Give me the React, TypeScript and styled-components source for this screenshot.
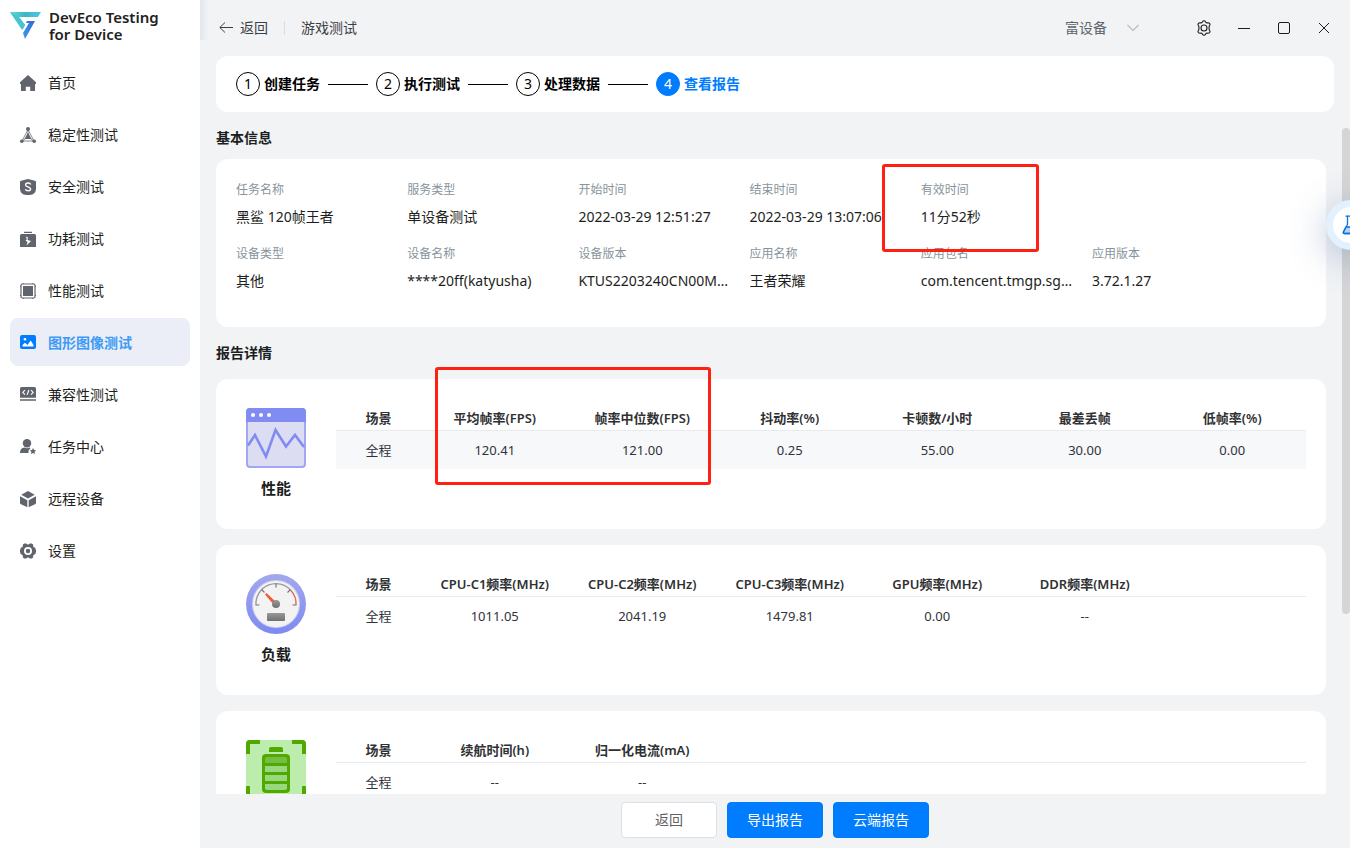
import React from "react";
import styled, { createGlobalStyle, css } from "styled-components";

const GlobalStyle = createGlobalStyle`
  * { box-sizing: border-box; }
  html, body, #root { height: 100%; margin: 0; }
  body {
    overflow: hidden;
    background: #f1f3f5;
    color: #1c1e21;
    font-family: "Noto Sans", "Noto Sans CJK SC", sans-serif;
    font-size: 14px;
    line-height: 20px;
  }
  button, select { font: inherit; color: inherit; }
`;

const Shell = styled.div`
  display: flex;
  height: 100vh;
`;

const Sidebar = styled.aside`
  flex: 0 0 200px;
  background: #fff;
`;

const Brand = styled.div`
  position: relative;
  display: flex;
  gap: 8px;
  height: 58px;
  padding: 9px 0 0 9px;

  &::after {
    content: "";
    position: absolute;
    left: 100%;
    top: 0;
    width: 8px;
    height: 40px;
    background: linear-gradient(to right, #e0e6ee, #f1f3f5);
  }
`;

const BrandName = styled.div`
  font-size: 15px;
  font-weight: 600;
  line-height: 17px;
  color: #222;
  white-space: nowrap;
`;

const Nav = styled.nav`
  display: flex;
  flex-direction: column;
  gap: 4px;
  padding: 0 10px;
`;

const NavItem = styled.a<{ $active?: boolean }>`
  display: flex;
  align-items: center;
  gap: 12px;
  height: 48px;
  padding: 2px 10px 0;
  border-radius: 8px;
  color: #1c1e21;
  text-decoration: none;

  svg { color: #60656d; }

  ${(p) =>
    p.$active &&
    css`
      background: #ebeef6;
      color: #3d9bf5;
      font-weight: 700;
      svg { color: #007dff; }
    `}
`;

const Main = styled.main`
  display: flex;
  flex: 1;
  flex-direction: column;
  min-width: 0;
`;

const TopBar = styled.header`
  display: flex;
  align-items: center;
  justify-content: space-between;
  height: 56px;
  padding: 0 6px 0 19px;
`;

const Crumbs = styled.div`
  display: flex;
  align-items: center;
  gap: 16px;
  color: #3c4046;
`;

const BackButton = styled.button`
  display: flex;
  align-items: center;
  gap: 7px;
  padding: 0;
  border: 0;
  background: none;
`;

const Divider = styled.span`
  width: 1px;
  height: 14px;
  background: #d8dde6;
`;

const Controls = styled.div`
  display: flex;
  align-items: center;
`;

const DeviceSelect = styled.label`
  display: flex;
  align-items: center;
  width: 119px;
  color: #60656d;

  select {
    width: 62px;
    padding: 0;
    border: 0;
    background: none;
    appearance: none;
  }
`;

const WindowButton = styled.button`
  display: flex;
  align-items: center;
  justify-content: center;
  width: 40px;
  height: 40px;
  padding: 0;
  border: 0;
  background: none;
`;

const Steps = styled.ol`
  display: flex;
  align-items: center;
  gap: 8px;
  flex: 0 0 56px;
  margin: 0 16px;
  padding: 0 20px;
  border-radius: 12px;
  background: #fff;
  list-style: none;
`;

const Step = styled.li<{ $active?: boolean }>`
  display: flex;
  align-items: center;
  gap: 4px;
  font-weight: 700;
  color: ${(p) => (p.$active ? "#007dff" : "#000")};

  &:not(:last-child)::after {
    content: "";
    width: 40px;
    height: 1px;
    margin-left: 4px;
    background: #000;
  }
`;

const StepNumber = styled.span<{ $active?: boolean }>`
  width: 24px;
  height: 24px;
  border: 1px solid ${(p) => (p.$active ? "#007dff" : "#000")};
  border-radius: 50%;
  background: ${(p) => (p.$active ? "#007dff" : "#fff")};
  color: ${(p) => (p.$active ? "#fff" : "#000")};
  font-weight: 400;
  line-height: 22px;
  text-align: center;
`;

const ReportArea = styled.div`
  position: relative;
  flex: 1;
  min-height: 0;
  margin-top: 16px;
`;

const Scroller = styled.div`
  display: flex;
  flex-direction: column;
  gap: 16px;
  height: 100%;
  padding: 0 24px 16px 16px;
  overflow-y: auto;
  scrollbar-width: none;
`;

const ScrollThumb = styled.div`
  position: absolute;
  top: 0;
  right: 0;
  width: 8px;
  height: 73%;
  border-radius: 4px;
  background: #d4d5d6;
`;

const Section = styled.section<{ $compact?: boolean }>`
  display: flex;
  flex-direction: column;
  gap: ${(p) => (p.$compact ? 11 : 16)}px;
`;

const SectionTitle = styled.h2`
  margin: 0;
  font-size: 14px;
  font-weight: 700;
  line-height: 20px;
`;

const InfoCard = styled.dl`
  display: grid;
  grid-template-columns: repeat(6, 16%);
  row-gap: 12px;
  margin: 0;
  padding: 21px 20px 31px;
  border-radius: 12px;
  background: #fff;
`;

const InfoItem = styled.div`
  position: relative;
  height: 52px;

  dt {
    margin-bottom: 7px;
    color: #87949c;
    font-size: 12px;
  }
  dd {
    margin: 0;
    padding-right: 16px;
    overflow: hidden;
    text-overflow: ellipsis;
    white-space: nowrap;
  }
`;

const Marker = styled.span`
  position: absolute;
  border: 3px solid #ff2012;
  border-radius: 3px;
  pointer-events: none;
`;

const TimeMarker = styled(Marker)`
  z-index: 1;
  top: -16px;
  left: -39px;
  width: 157px;
  height: 88px;
`;

const FrameRateMarker = styled(Marker)`
  top: -31px;
  left: 99px;
  width: calc((100% - 85px) / 3 - 19px);
  height: 118px;
`;

const MetricCard = styled.article`
  display: flex;
  flex: none;
  gap: 30px;
  height: 150px;
  padding: 19px 20px 0 30px;
  border-radius: 12px;
  background: #fff;
`;

const MetricBadge = styled.div`
  display: flex;
  flex-direction: column;
  align-items: center;
  gap: 10px;
  padding-top: 10px;
  font-size: 15px;
  font-weight: 700;
`;

const TableArea = styled.div`
  position: relative;
  flex: 1;
  min-width: 0;
`;

const Table = styled.table<{ $shaded?: boolean }>`
  width: 100%;
  border-collapse: collapse;
  table-layout: fixed;
  font-size: 13px;
  text-align: center;

  th {
    height: 32px;
    padding: 8px 0 0;
    border-bottom: 1px solid #e8eaf2;
    color: #303133;
    font-weight: 600;
    white-space: nowrap;
  }
  th:first-child { width: 85px; }
  td {
    height: 39px;
    padding: 0;
    background: ${(p) => (p.$shaded ? "#f7f8fa" : "#fff")};
    color: #303339;
  }
`;

const Footer = styled.footer`
  display: flex;
  justify-content: center;
  gap: 10px;
  padding: 8px 0 10px;
`;

const ActionButton = styled.button<{ $primary?: boolean }>`
  width: 96px;
  height: 36px;
  padding: 0;
  border: 1px solid ${(p) => (p.$primary ? "#007dff" : "#dcdfe6")};
  border-radius: 4px;
  background: ${(p) => (p.$primary ? "#007dff" : "#fff")};
  color: ${(p) => (p.$primary ? "#fff" : "#606266")};
`;

const LabButton = styled.button`
  position: fixed;
  z-index: 2;
  top: 200px;
  right: -26px;
  display: flex;
  align-items: center;
  justify-content: center;
  width: 50px;
  height: 50px;
  padding: 0;
  border: 7px solid #e3f1ff;
  border-radius: 50%;
  background: #fff;
  box-shadow: 0 8px 36px rgba(60, 90, 150, 0.35);
`;

function LogoIcon() {
  return (
    <svg width="32" height="32" viewBox="0 0 32 32" aria-hidden="true">
      <defs>
        <linearGradient id="logoA" x1="0" y1="0" x2="1" y2="0">
          <stop offset="0" stopColor="#5fdde0" />
          <stop offset=".5" stopColor="#3db4c4" />
          <stop offset="1" stopColor="#4cc8f0" />
        </linearGradient>
        <linearGradient id="logoB" x1="1" y1="0" x2="0" y2="1">
          <stop offset="0" stopColor="#3566d6" />
          <stop offset="1" stopColor="#3c9cf0" />
        </linearGradient>
      </defs>
      <path d="M1 3h31l-3 5H10l6 8-2 4z" fill="url(#logoA)" />
      <path d="M1 3l9 5 6 8-3 5z" fill="#48c4cc" />
      <path d="M18 12h8L16 30l-2-6 6-10h-3z" fill="url(#logoB)" />
    </svg>
  );
}

function NavIcon({ children }: { children: React.ReactNode }) {
  return (
    <svg width="16" height="16" viewBox="0 0 16 16" fill="currentColor" aria-hidden="true">
      {children}
    </svg>
  );
}

const navItems = [
  {
    label: "首页",
    icon: <path d="M8 0 0 7.200V9h1v7h4.800v-4.200h4.400V16H15V9h1V7.200z" />,
  },
  {
    label: "稳定性测试",
    icon: (
      <>
        <path d="M8 2.500 2 14h12zM8 2.500V9M2 14l6-4 6 4" fill="none" stroke="currentColor" strokeOpacity=".75" />
        <path d="M8 5.500 11.500 12h-7z" />
        <circle cx="8" cy="2" r="2" />
        <circle cx="1.800" cy="14.200" r="1.800" />
        <circle cx="14.200" cy="14.200" r="1.800" />
      </>
    ),
  },
  {
    label: "安全测试",
    icon: (
      <>
        <path d="M8 0 15 1.700q1 .3 1 1.300v6.500Q16 16 9.500 16h-3Q0 16 0 9.500V3q0-1 1-1.300z" />
        <path d="M10.700 5.500C10 3.400 5.600 3.500 5.600 5.900c0 2.500 5 1.600 5 4.200 0 2.300-4.400 2.400-5.200.2" fill="none" stroke="#fff" strokeWidth="1.400" />
      </>
    ),
  },
  {
    label: "功耗测试",
    icon: (
      <>
        <path d="M4 .7h8V2H4zM1.500 3h13Q16 3 16 4.500V16H0V4.500Q0 3 1.500 3z" />
        <path d="M5.500 5.500 8 6.500 7.500 9l3.500 1-4.500 4.500 1-3.500L5.500 9.500 7 8z" fill="#fff" />
      </>
    ),
  },
  {
    label: "性能测试",
    icon: (
      <>
        <rect x="1" y="1" width="14" height="14" rx="1.500" fill="none" stroke="currentColor" strokeWidth="1.200" />
        <path d="M3.200 0v1M12.800 0v1M3.200 15v1M12.800 15v1M0 3.500h1M0 12.500h1M15 3.500h1M15 12.500h1" stroke="currentColor" />
        <path d="M3 3h10v10H3z" />
      </>
    ),
  },
  {
    label: "图形图像测试",
    active: true,
    icon: (
      <>
        <rect width="16" height="14" rx="2" />
        <circle cx="5" cy="4.200" r="1.300" fill="#fff" />
        <path d="M2.500 11.500V10L5 7.800 7.500 10l3.200-4.500 2.800 4.500v1.500z" fill="#fff" />
      </>
    ),
  },
  {
    label: "兼容性测试",
    icon: (
      <>
        <path d="M1.500 0h13Q16 0 16 1.500V10.700H0V1.500Q0 0 1.500 0zM0 12.300h16v1.400H0z" />
        <path d="M5 3.200 2.800 5.400 5 7.600M11 3.200l2.200 2.200L11 7.600M8.900 3 7.100 7.900" fill="none" stroke="#fff" strokeWidth="1.100" />
      </>
    ),
  },
  {
    label: "任务中心",
    icon: (
      <>
        <circle cx="7" cy="4.200" r="4.200" />
        <path d="M4.500 8.500c1.500.9 3.500.9 5 0L10.500 9.200 8.500 11.500v2.500H0C0 11.200 1.500 8.700 4.500 8.500z" />
        <path d="m13 9 1 2 2.200.3-1.600 1.500.4 2.200-2-1-2 1 .4-2.200-1.600-1.500L12 11z" />
      </>
    ),
  },
  {
    label: "远程设备",
    icon: (
      <>
        <path d="M8 0 14.700 3.700 8 7.500 1.300 3.700z" />
        <path d="M0 5.200 7.300 9.200V16.200L1 13.200q-1-.5-1-1.500zM16 5.200 8.700 9.200V16.200L15 13.200q1-.5 1-1.500z" />
      </>
    ),
  },
  {
    label: "设置",
    icon: (
      <>
        <path
          fillRule="evenodd"
          d="M4.200.6h2L8 1.700 9.800.6h2l1.300 1 .2 2.100 2 1.400.7 2.100v1.600l-.7 2.100-2 1.400-.2 2.100-1.300 1h-2L8 14.300l-1.800 1.100h-2l-1.300-1-.2-2.100-2-1.400L0 8.800V7.200l.7-2.100 2-1.400.2-2.100zM8 4a4 4 0 1 0 0 8 4 4 0 0 0 0-8z"
        />
        <circle cx="8" cy="8" r="2.200" />
      </>
    ),
  },
];

function PerformanceIcon() {
  return (
    <svg width="60" height="60" viewBox="0 0 60 60" aria-hidden="true">
      <rect x="1" y="1" width="58" height="58" rx="3" fill="#dcdcf2" stroke="#a0a6f0" strokeWidth="2" />
      <path d="M0 14V4q0-4 4-4h52q4 0 4 4v10z" fill="#818cf2" />
      <circle cx="7" cy="7" r="2" fill="#fff" />
      <circle cx="15" cy="7" r="2" fill="#fff" />
      <circle cx="23" cy="7" r="2" fill="#fff" />
      <path d="M2 37.500 9 27l11 21.500L29.500 22 40 38.500 49 27l9 12" fill="none" stroke="#818cf2" strokeWidth="2.600" />
    </svg>
  );
}

function LoadIcon() {
  return (
    <svg width="60" height="60" viewBox="0 0 60 60" aria-hidden="true">
      <defs>
        <linearGradient id="ring" x1="0" y1="0" x2="0" y2="1">
          <stop offset="0" stopColor="#a3a8ee" />
          <stop offset="1" stopColor="#7d8af2" />
        </linearGradient>
        <linearGradient id="metal" x1="0" y1="0" x2="0" y2="1">
          <stop offset="0" stopColor="#999" />
          <stop offset="1" stopColor="#707070" />
        </linearGradient>
      </defs>
      <circle cx="30" cy="30" r="30" fill="url(#ring)" />
      <circle cx="30" cy="30" r="24" fill="#d0d2ec" />
      <circle cx="30" cy="30" r="23" fill="#f3f3f3" />
      <path d="M10 31a20 20 0 0 1 35-14.500" fill="none" stroke="#999" strokeWidth="1.300" />
      <path d="M45 16.500A20 20 0 0 1 50 31" fill="none" stroke="#e06a50" strokeWidth="1.300" />
      <path d="M9.500 31h4M46.500 31h4M30 9.500v4M15.500 15.500l3 3M44.500 15.500l-3 3" stroke="#777" strokeWidth="1.200" />
      <path d="M19 20.500 20.500 19l10 9.500-2.500 2.500z" fill="#ee5a3c" />
      <circle cx="30" cy="30" r="4" fill="url(#metal)" />
      <rect x="21" y="39" width="18" height="8" rx="1" fill="url(#metal)" />
    </svg>
  );
}

function BatteryIcon() {
  return (
    <svg width="60" height="60" viewBox="0 0 60 60" aria-hidden="true">
      <rect width="60" height="60" rx="3" fill="#bcedad" />
      <path d="M2 14V4q0-2 2-2h10M46 2h10q2 0 2 2v10M2 46v10q0 2 2 2h10M46 58h10q2 0 2-2V46" fill="none" stroke="#51a800" strokeWidth="4" />
      <path d="M23 12V9q0-2 2-2h10q2 0 2 2v3z" fill="#51a800" />
      <rect x="16" y="14" width="28" height="39" rx="4" fill="#51a800" />
      <path d="M19 19q0-2 2-2h18q2 0 2 2v4H19z" fill="#76bd43" />
      <path d="M19 26h22v6H19zM19 35h22v6H19zM19 44h22v4q0 2-2 2H21q-2 0-2-2z" fill="#98d97f" />
    </svg>
  );
}

const steps = ["创建任务", "执行测试", "处理数据", "查看报告"];

const info = [
  ["任务名称", "黑鲨 120帧王者"],
  ["服务类型", "单设备测试"],
  ["开始时间", "2022-03-29 12:51:27"],
  ["结束时间", "2022-03-29 13:07:06"],
  ["有效时间", "11分52秒"],
  [],
  ["设备类型", "其他"],
  ["设备名称", "****20ff(katyusha)"],
  ["设备版本", "KTUS2203240CN00MP1028"],
  ["应用名称", "王者荣耀"],
  ["应用包名", "com.tencent.tmgp.sgame"],
  ["应用版本", "3.72.1.27"],
];

const metrics = [
  {
    name: "性能",
    icon: <PerformanceIcon />,
    highlighted: true,
    heads: ["平均帧率(FPS)", "帧率中位数(FPS)", "抖动率(%)", "卡顿数/小时", "最差丢帧", "低帧率(%)"],
    values: ["120.41", "121.00", "0.25", "55.00", "30.00", "0.00"],
  },
  {
    name: "负载",
    icon: <LoadIcon />,
    heads: ["CPU-C1频率(MHz)", "CPU-C2频率(MHz)", "CPU-C3频率(MHz)", "GPU频率(MHz)", "DDR频率(MHz)", ""],
    values: ["1011.05", "2041.19", "1479.81", "0.00", "--", ""],
  },
  {
    name: "功耗",
    icon: <BatteryIcon />,
    heads: ["续航时间(h)", "归一化电流(mA)", "", "", "", ""],
    values: ["--", "--", "", "", "", ""],
  },
];

export default function App() {
  return (
    <>
      <GlobalStyle />
      <Shell>
        <Sidebar>
          <Brand>
            <LogoIcon />
            <BrandName>
              DevEco Testing
              <br />
              for Device
            </BrandName>
          </Brand>
          <Nav>
            {navItems.map((item) => (
              <NavItem key={item.label} href="#" $active={item.active}>
                <NavIcon>{item.icon}</NavIcon>
                {item.label}
              </NavItem>
            ))}
          </Nav>
        </Sidebar>

        <Main>
          <TopBar>
            <Crumbs>
              <BackButton>
                <svg width="14" height="12" viewBox="0 0 14 12" fill="none" stroke="currentColor" aria-hidden="true">
                  <path d="M14 5.500H1M6 .5.8 5.500 6 10.500" />
                </svg>
                返回
              </BackButton>
              <Divider />
              <span>游戏测试</span>
            </Crumbs>
            <Controls>
              <DeviceSelect>
                <select aria-label="设备">
                  <option>富设备</option>
                </select>
                <svg width="12" height="8" viewBox="0 0 12 8" fill="none" stroke="#b8bcc4" strokeWidth="1.200" aria-hidden="true">
                  <path d="m.5 1 5.500 5.500L11.500 1" />
                </svg>
              </DeviceSelect>
              <WindowButton aria-label="设置">
                <svg width="16" height="16" viewBox="0 0 16 16" fill="none" stroke="currentColor" strokeWidth="1.100" strokeLinejoin="round" aria-hidden="true">
                  <path d="M8 .8q1 0 1.500 1l.4.700 1 .4 1-.1q1.300 0 1.900 1 .5 1-.2 1.900l-.5.700v3.200l.5.700q.7.900.2 1.900-.6 1-1.900 1l-1-.1-1 .4-.4.700q-.5 1-1.500 1t-1.500-1l-.4-.7-1-.4-1 .1q-1.300 0-1.900-1-.5-1 .2-1.900l.5-.7V6.400l-.5-.7q-.7-.9-.2-1.900.6-1 1.900-1l1 .1 1-.4.4-.7q.5-1 1.500-1z" />
                  <circle cx="8" cy="8" r="3" />
                </svg>
              </WindowButton>
              <WindowButton aria-label="最小化">
                <svg width="12" height="12" viewBox="0 0 12 12" stroke="currentColor" aria-hidden="true">
                  <path d="M0 6.500h12" />
                </svg>
              </WindowButton>
              <WindowButton aria-label="最大化">
                <svg width="12" height="12" viewBox="0 0 12 12" fill="none" stroke="currentColor" aria-hidden="true">
                  <rect x=".5" y=".5" width="11" height="11" rx="1.500" />
                </svg>
              </WindowButton>
              <WindowButton aria-label="关闭">
                <svg width="12" height="12" viewBox="0 0 12 12" stroke="currentColor" aria-hidden="true">
                  <path d="m1 1 10 10M11 1 1 11" />
                </svg>
              </WindowButton>
            </Controls>
          </TopBar>

          <Steps>
            {steps.map((label, i) => (
              <Step key={label} $active={i === 3}>
                <StepNumber $active={i === 3}>{i + 1}</StepNumber>
                {label}
              </Step>
            ))}
          </Steps>

          <ReportArea>
            <Scroller>
              <Section $compact>
                <SectionTitle>基本信息</SectionTitle>
                <InfoCard>
                  {info.map(([label, value], i) => (
                    <InfoItem key={i}>
                      {label && <dt>{label}</dt>}
                      {value && <dd>{value}</dd>}
                      {label === "有效时间" && <TimeMarker />}
                    </InfoItem>
                  ))}
                </InfoCard>
              </Section>
              <Section>
                <SectionTitle>报告详情</SectionTitle>
                {metrics.map((m) => (
                  <MetricCard key={m.name}>
                    <MetricBadge>
                      {m.icon}
                      {m.name}
                    </MetricBadge>
                    <TableArea>
                      <Table $shaded={m.highlighted}>
                        <thead>
                          <tr>
                            <th>场景</th>
                            {m.heads.map((h, i) => (
                              <th key={i}>{h}</th>
                            ))}
                          </tr>
                        </thead>
                        <tbody>
                          <tr>
                            <td>全程</td>
                            {m.values.map((v, i) => (
                              <td key={i}>{v}</td>
                            ))}
                          </tr>
                        </tbody>
                      </Table>
                      {m.highlighted && <FrameRateMarker />}
                    </TableArea>
                  </MetricCard>
                ))}
              </Section>
            </Scroller>
            <ScrollThumb />
          </ReportArea>

          <Footer>
            <ActionButton>返回</ActionButton>
            <ActionButton $primary>导出报告</ActionButton>
            <ActionButton $primary>云端报告</ActionButton>
          </Footer>
        </Main>
      </Shell>
      <LabButton aria-label="实验室">
        <svg width="18" height="20" viewBox="0 0 18 20" fill="none" stroke="#0a6fe0" strokeWidth="1.300" strokeLinejoin="round" aria-hidden="true">
          <path d="M4 12h10l2.500 5q.5 1.500-1 1.500h-13q-1.500 0-1-1.500z" fill="#b5d5f7" />
          <path d="M3.500 1.200h11M5.500 1.200V9.500l-4 7q-.8 2 1 2h13q1.800 0 1-2l-4-7V1.200" />
        </svg>
      </LabButton>
    </>
  );
}
